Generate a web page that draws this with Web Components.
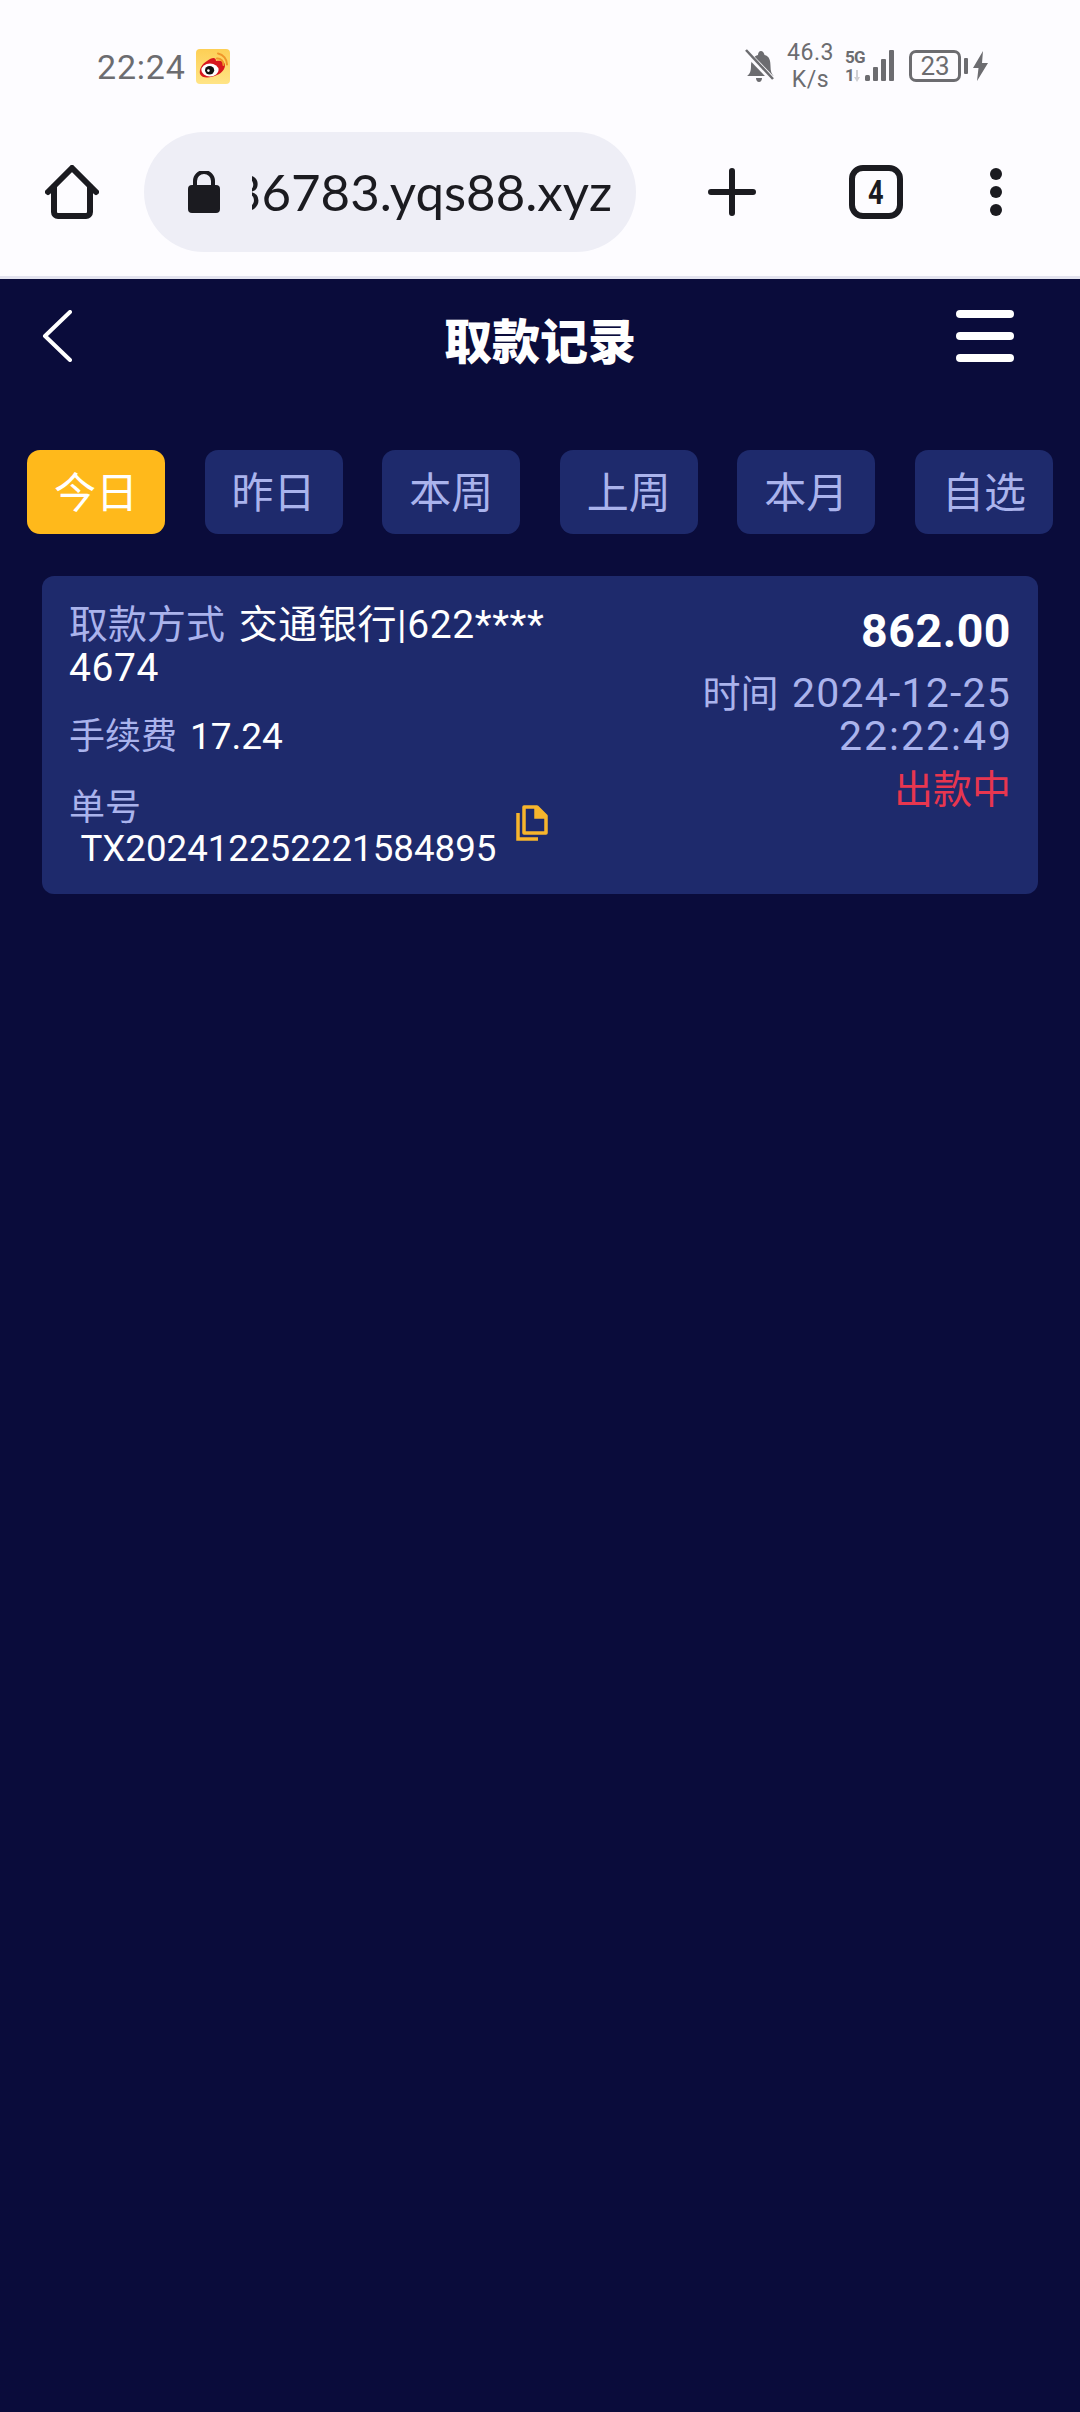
<!DOCTYPE html>
<html lang="zh-CN">
<head>
<meta charset="utf-8">
<title>取款记录</title>
<style>
  html, body { margin: 0; padding: 0; background: #0a0c3b; }
  body { width: 1080px; min-height: 2412px; font-family: Roboto, "Noto Sans CJK SC", sans-serif; }
</style>
</head>
<body>
<status-bar></status-bar>
<browser-bar url="36783.yqs88.xyz" tabs="4"></browser-bar>
<page-nav>取款记录</page-nav>
<filter-tabs>
  <filter-tab active>今日</filter-tab>
  <filter-tab>昨日</filter-tab>
  <filter-tab>本周</filter-tab>
  <filter-tab>上周</filter-tab>
  <filter-tab>本月</filter-tab>
  <filter-tab>自选</filter-tab>
</filter-tabs>
<record-card
  method="交通银行|622****4674"
  fee="17.24"
  order="TX20241225222158​4895"
  amount="862.00"
  date="2024-12-25"
  clock="22:22:49"
  state="出款中"></record-card>

<script>
class StatusBar extends HTMLElement {
  connectedCallback() {
    this.attachShadow({ mode: 'open' });
    this.shadowRoot.innerHTML = `
      <style>
        :host {
          display: flex;
          align-items: center;
          justify-content: space-between;
          height: 132px;
          padding: 0 92px 0 97px;
          box-sizing: border-box;
          background: #fdfcff;
          color: #6c6c70;
          font-family: Roboto, sans-serif;
        }
        .left, .right { display: flex; align-items: center; }
        .time { font-size: 34px; letter-spacing: 0.8px; line-height: 40px; padding-top: 2px; }
        .weibo { margin-left: 10px; display: block; }
        .speed {
          margin: 0 11px 0 13px;
          width: 47px;
          font-size: 23px;
          line-height: 27px;
          text-align: center;
          letter-spacing: 0.5px;
          white-space: nowrap;
        }
        .speed div { display: flex; justify-content: center; }
        .net { display: flex; align-items: flex-end; height: 32px; }
        .gen { display: flex; flex-direction: column; justify-content: space-between; height: 32px; width: 20px; font-size: 17px; line-height: 14px; font-weight: 700; letter-spacing: -0.8px; }
        .batt {
          width: 52px;
          height: 32px;
          margin-left: 13px;
          box-sizing: border-box;
          border: 3px solid #6c6c70;
          border-radius: 7px;
          display: flex;
          align-items: center;
          justify-content: center;
          font-size: 26px;
          line-height: 26px;
        }
        .nub { width: 4px; height: 16px; background: #6c6c70; border-radius: 1px; margin: 0 5px 0 3px; }
        svg { display: block; }
      </style>
      <div class="left">
        <span class="time">22:24</span>
        <svg class="weibo" width="34" height="35" viewBox="0 0 34 35">
          <defs><linearGradient id="w" x1="0" y1="0" x2="0" y2="1"><stop offset="0" stop-color="#fdcf55"/><stop offset="1" stop-color="#ffe486"/></linearGradient></defs>
          <rect width="34" height="35" rx="4" fill="url(#w)"/>
          <path d="M4 25c-1-5 2-10 7-13 5-4 9-4 9 0 3-1 9 0 9 4 0 4-3 8-8 10-6 3-15 4-17-1z" fill="#d8171d"/>
          <ellipse cx="14" cy="21" rx="8.6" ry="6.4" fill="#fff"/>
          <ellipse cx="13.6" cy="21.2" rx="4.6" ry="4.2" fill="#111"/>
          <circle cx="12.4" cy="21.6" r="1.3" fill="#fff"/>
          <path d="M21 9.5a6 6 0 0 1 6.5 6.5M22 4.5a11 11 0 0 1 9 11" fill="none" stroke="#f0962a" stroke-width="2" stroke-linecap="round"/>
        </svg>
      </div>
      <div class="right">
        <svg width="29" height="34" viewBox="0 0 29 34">
          <path d="M2 27c3-2 4-5 4-10 0-6 3-10 7-11 0-2 1-4 3-4s3 2 3.500 4c5 1 6 6 6 11 0 5 1 8 3 10z" fill="#6c6c70"/>
          <path d="M11 29h6c0 2-1 4-3 4s-3-2-3-4z" fill="#6c6c70"/>
          <path d="M1 3l27 28" stroke="#fdfcff" stroke-width="6"/>
          <path d="M1 1l27 29" stroke="#6c6c70" stroke-width="2.500"/>
        </svg>
        <div class="speed"><div>46.3</div><div>K/s</div></div>
        <div class="net">
          <div class="gen"><span>5G</span><span>1<svg style="display:inline;vertical-align:-1px" width="6" height="12" viewBox="0 0 6 12"><path d="M2 0h2v7h2l-3 5-3-5h2z" fill="#cfcfd2"/></svg></span></div>
          <svg width="31" height="32" viewBox="0 0 31 32">
            <rect x="0" y="25" width="5" height="6" rx="1.500" fill="#6c6c70"/>
            <rect x="8" y="17" width="5" height="14" rx="1" fill="#6c6c70"/>
            <rect x="16" y="9" width="5" height="22" rx="1" fill="#6c6c70"/>
            <rect x="24" y="0" width="5" height="31" rx="1" fill="#6c6c70"/>
          </svg>
        </div>
        <div class="batt">23</div>
        <div class="nub"></div>
        <svg width="15" height="30" viewBox="0 0 15 30"><path d="M10 0L0 17h5.500L4 30 15 12H9z" fill="#6c6c70"/></svg>
      </div>
    `;
  }
}

class BrowserBar extends HTMLElement {
  connectedCallback() {
    this.attachShadow({ mode: 'open' });
    this.shadowRoot.innerHTML = `
      <style>
        :host {
          display: flex;
          align-items: center;
          height: 147px;
          padding: 0 0 24px 45px;
          box-sizing: border-box;
          background: #fdfcff;
          border-bottom: 3px solid #e3e3ef;
          color: #1b1b20;
          font-family: Roboto, sans-serif;
        }
        svg { display: block; flex: none; }
        .omni {
          width: 492px;
          height: 120px;
          margin: 0 72px 0 45px;
          padding: 0 24px 0 44px;
          box-sizing: border-box;
          border-radius: 60px;
          background: #eeeef6;
          display: flex;
          align-items: center;
          flex: none;
        }
        .url {
          margin-left: 32px;
          flex: 1;
          min-width: 0;
          overflow: hidden;
          display: flex;
          justify-content: flex-end;
          font-family: Lato, sans-serif;
          font-size: 51px;
          line-height: 64px;
          white-space: nowrap;
        }
        .count {
          width: 54px;
          height: 54px;
          margin: 0 87px 0 93px;
          box-sizing: border-box;
          border: 6px solid #1b1b20;
          border-radius: 14px;
          display: flex;
          align-items: center;
          justify-content: center;
          font-size: 34px;
          font-weight: 700;
          flex: none;
        }
        .count span { display: block; transform: scaleX(0.8); }
        .dots { display: flex; flex-direction: column; gap: 6px; }
        .dots i { width: 12px; height: 12px; border-radius: 50%; background: #1b1b20; }
      </style>
      <svg width="54" height="54" viewBox="0 0 54 54" fill="none" stroke="#1b1b20" stroke-width="6" stroke-linecap="round" stroke-linejoin="round">
        <path d="M3 27L27 3l24 24"/>
        <path d="M9 22v25a4 4 0 0 0 4 4h28a4 4 0 0 0 4-4V22"/>
      </svg>
      <div class="omni">
        <svg width="32" height="42" viewBox="0 0 32 42">
          <rect x="0" y="14" width="32" height="28" rx="4" fill="#1b1b20"/>
          <path d="M7 16V10a9 9 0 0 1 18 0v6" fill="none" stroke="#1b1b20" stroke-width="4"/>
        </svg>
        <div class="url"><span>${this.getAttribute('url')}</span></div>
      </div>
      <svg width="48" height="48" viewBox="0 0 48 48" stroke="#1b1b20" stroke-width="6" stroke-linecap="round">
        <path d="M3 24h42M24 3v42"/>
      </svg>
      <div class="count"><span>${this.getAttribute('tabs')}</span></div>
      <div class="dots"><i></i><i></i><i></i></div>
    `;
  }
}

class PageNav extends HTMLElement {
  connectedCallback() {
    this.attachShadow({ mode: 'open' });
    this.shadowRoot.innerHTML = `
      <style>
        :host {
          display: grid;
          grid-template-columns: 1fr auto 1fr;
          align-items: start;
          height: 171px;
          padding: 31px 66px 0 42px;
          box-sizing: border-box;
          color: #fff;
        }
        .back { display: block; margin-right: 24px; }
        h1 {
          margin: -3px 0 0;
          padding-left: 24px;
          font: 900 48px/62px "Noto Sans CJK SC", sans-serif;
        }
        .menu { width: 58px; justify-self: end; display: flex; flex-direction: column; gap: 14px; }
        .menu i { height: 8px; border-radius: 4px; background: #fff; }
      </style>
      <svg class="back" width="30" height="52" viewBox="0 0 30 52" fill="none" stroke="#fff" stroke-width="4" stroke-linecap="round" stroke-linejoin="round">
        <path d="M28 2L3 26l25 24"/>
      </svg>
      <h1><slot></slot></h1>
      <div class="menu"><i></i><i></i><i></i></div>
    `;
  }
}

class FilterTabs extends HTMLElement {
  connectedCallback() {
    this.attachShadow({ mode: 'open' });
    this.shadowRoot.innerHTML = `
      <style>
        :host {
          display: flex;
          justify-content: space-between;
          padding: 0 27px;
        }
      </style>
      <slot></slot>
    `;
  }
}

class FilterTab extends HTMLElement {
  connectedCallback() {
    this.attachShadow({ mode: 'open' });
    this.shadowRoot.innerHTML = `
      <style>
        :host {
          display: flex;
          align-items: center;
          justify-content: center;
          width: 138px;
          height: 84px;
          padding-bottom: 4px;
          box-sizing: border-box;
          border-radius: 13px;
          background: #1e2a6c;
          color: #aab3ec;
          font: 400 42px/48px "Noto Sans CJK SC", sans-serif;
        }
        :host([active]) { background: #ffb91b; color: #fff; }
      </style>
      <slot></slot>
    `;
  }
}

class RecordCard extends HTMLElement {
  connectedCallback() {
    const a = n => this.getAttribute(n);
    this.attachShadow({ mode: 'open' });
    this.shadowRoot.innerHTML = `
      <style>
        :host {
          display: flex;
          justify-content: space-between;
          height: 318px;
          margin: 42px 42px 0;
          padding: 28px 27px 0 27px;
          box-sizing: border-box;
          border-radius: 12px;
          background: #1e2a6c;
          color: #fff;
          font: 400 36px/43px Roboto, "Noto Sans CJK SC", sans-serif;
        }
        .label { color: #aab3ec; }
        .left { width: 490px; display: flex; flex-direction: column; gap: 25px; }
        .method { width: 484px; font-size: 39px; word-break: break-all; word-spacing: 4px; }
        .method b { font-weight: 400; letter-spacing: 0.6px; }
        .fee b { font-weight: 400; font-size: 37px; margin-left: 4px; }
        .order { display: flex; align-items: center; gap: 20px; margin-top: 3px; }
        .order .label { margin-bottom: -3px; }
        .code { font-size: 36.700px; white-space: pre; padding-left: 3px; }
        .copy { display: block; flex: none; margin-top: -12px; }
        .right { text-align: right; color: #aab3ec; font-size: 38px; }
        .amount { color: #fff; font-size: 46.500px; line-height: 56px; font-weight: 700; letter-spacing: 0.5px; margin: -1px 0 13px; }
        .when { line-height: 42px; }
        .when b { font-weight: 400; font-size: 41px; margin-left: 4px; letter-spacing: 1.2px; }
        .when b.clock { letter-spacing: 2px; margin: 0 -2px 0 0; }
        .state { color: #e8364f; margin-top: 11px; line-height: 42px; font-size: 39px; }
      </style>
      <div class="left">
        <div class="method"><span class="label">取款方式</span> <b>${a('method')}</b></div>
        <div class="fee"><span class="label">手续费</span> <b>${a('fee')}</b></div>
        <div class="order">
          <div>
            <div class="label">单号</div>
            <div class="code"> ${a('order')}</div>
          </div>
          <svg class="copy" width="32" height="36" viewBox="0 0 32 36" fill="none" stroke="#f7b52c" stroke-width="3.500">
            <path d="M8 2h13l9 9v17H8z" stroke-linejoin="round"/>
            <path d="M20 2v10h10" fill="#f7b52c"/>
            <path d="M2 8v26h20"/>
          </svg>
        </div>
      </div>
      <div class="right">
        <div class="amount">${a('amount')}</div>
        <div class="when">时间 <b>${a('date')}</b><br><b class="clock">${a('clock')}</b></div>
        <div class="state">${a('state')}</div>
      </div>
    `;
  }
}

customElements.define('status-bar', StatusBar);
customElements.define('browser-bar', BrowserBar);
customElements.define('page-nav', PageNav);
customElements.define('filter-tabs', FilterTabs);
customElements.define('filter-tab', FilterTab);
customElements.define('record-card', RecordCard);
</script>
</body>
</html>
